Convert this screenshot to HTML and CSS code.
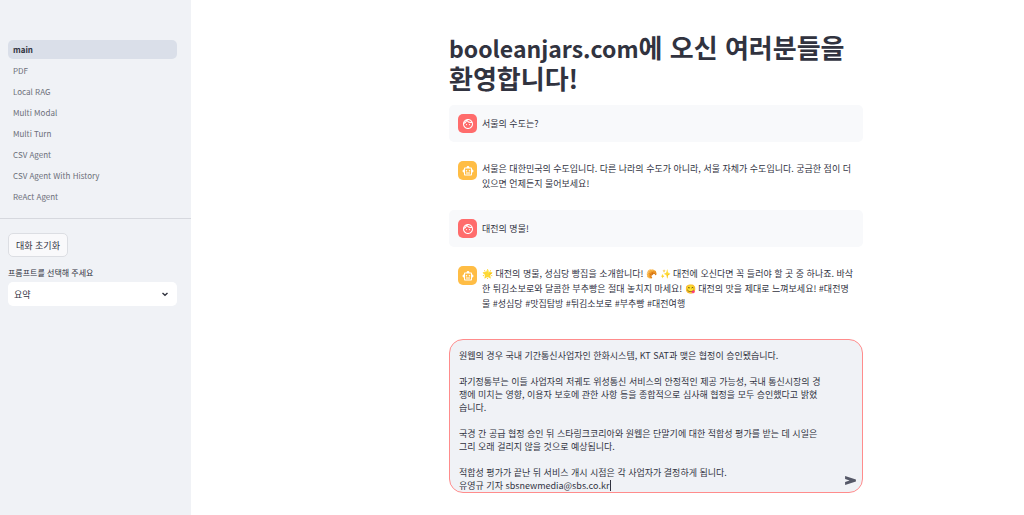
FILE: index.html
```html
<!DOCTYPE html>
<html lang="ko">
<head>
    <meta charset="UTF-8">
    <meta name="viewport" content="width=device-width, initial-scale=1.0">
    <title>main</title>
    <link rel="stylesheet" href="styles.css">
</head>
<body>
    <!-- Shared avatar icons -->
    <svg class="sprite" aria-hidden="true">
        <symbol id="icon-face" viewBox="0 0 24 24">
            <path d="M10.25 13a1.25 1.25 0 1 1-2.5 0 1.25 1.25 0 0 1 2.5 0zM15 11.75a1.25 1.25 0 1 0 0 2.5 1.25 1.25 0 0 0 0-2.5zM22 12c0 5.52-4.48 10-10 10S2 17.52 2 12 6.48 2 12 2s10 4.48 10 10zM10.66 4.12C12.06 6.44 14.6 8 17.5 8c.46 0 .91-.05 1.34-.12C17.44 5.56 14.9 4 12 4c-.46 0-.91.05-1.34.12zM4.42 9.47a8.05 8.05 0 0 0 3.66-4.44 8.05 8.05 0 0 0-3.66 4.44zM20 12c0-.78-.12-1.53-.33-2.24-.7.15-1.42.24-2.17.24a10 10 0 0 1-7.76-3.69A10.02 10.02 0 0 1 4 11.86V12c0 4.41 3.59 8 8 8s8-3.59 8-8z"/>
        </symbol>
        <symbol id="icon-bot" viewBox="0 0 24 24">
            <path d="M20 9V7c0-1.1-.9-2-2-2h-3c0-1.66-1.34-3-3-3S9 3.34 9 5H6c-1.1 0-2 .9-2 2v2c-1.66 0-3 1.34-3 3s1.34 3 3 3v4c0 1.1.9 2 2 2h12c1.1 0 2-.9 2-2v-4c1.66 0 3-1.34 3-3s-1.34-3-3-3zm-2 10H6V7h12v12zm-9-6c-.83 0-1.5-.67-1.5-1.5S8.17 10 9 10s1.5.67 1.5 1.5S9.83 13 9 13zm7.5-1.5c0 .83-.67 1.5-1.5 1.5s-1.5-.67-1.5-1.5.67-1.5 1.5-1.5 1.5.67 1.5 1.5zM8 15h8v2H8v-2z"/>
        </symbol>
    </svg>

    <div class="app">
        <aside class="sidebar">
            <nav class="nav">
                <a href="#" class="nav-link active">main</a>
                <a href="#" class="nav-link">PDF</a>
                <a href="#" class="nav-link">Local RAG</a>
                <a href="#" class="nav-link">Multi Modal</a>
                <a href="#" class="nav-link">Multi Turn</a>
                <a href="#" class="nav-link">CSV Agent</a>
                <a href="#" class="nav-link">CSV Agent With History</a>
                <a href="#" class="nav-link">ReAct Agent</a>
            </nav>
            <div class="controls">
                <button type="button" class="reset-btn">대화 초기화</button>
                <label for="prompt-type">프롬프트를 선택해 주세요</label>
                <div class="select-wrap">
                    <select id="prompt-type">
                        <option>요약</option>
                    </select>
                    <svg class="chevron" viewBox="0 0 8 8"><path d="M1.5 3l2.5 2.3L6.5 3"/></svg>
                </div>
            </div>
        </aside>

        <main class="main">
            <div class="column">
                <h1><span class="domain">booleanjars.com</span>에 오신 여러분들을 환영합니다!</h1>

                <div class="message user">
                    <div class="avatar"><svg><use href="#icon-face"/></svg></div>
                    <p>서울의 수도는?</p>
                </div>
                <div class="message bot">
                    <div class="avatar"><svg><use href="#icon-bot"/></svg></div>
                    <p>서울은 대한민국의 수도입니다. 다른 나라의 수도가 아니라, 서울 자체가 수도입니다. 궁금한 점이 더 있으면 언제든지 물어보세요!</p>
                </div>
                <div class="message user">
                    <div class="avatar"><svg><use href="#icon-face"/></svg></div>
                    <p>대전의 명물!</p>
                </div>
                <div class="message bot">
                    <div class="avatar"><svg><use href="#icon-bot"/></svg></div>
                    <p>🌟 대전의 명물, 성심당 빵집을 소개합니다! 🥐 ✨ 대전에 오신다면 꼭 들러야 할 곳 중 하나죠. 바삭<br>한 튀김소보로와 달콤한 부추빵은 절대 놓치지 마세요! 😋 대전의 맛을 제대로 느껴보세요! #대전명<br>물 #성심당 #맛집탐방 #튀김소보로 #부추빵 #대전여행</p>
                </div>

                <form class="composer">
                    <textarea id="chat-input" rows="11" aria-label="메시지" autofocus>원웹의 경우 국내 기간통신사업자인 한화시스템, KT SAT과 맺은 협정이 승인됐습니다.

과기정통부는 이들 사업자의 저궤도 위성통신 서비스의 안정적인 제공 가능성, 국내 통신시장의 경
쟁에 미치는 영향, 이용자 보호에 관한 사항 등을 종합적으로 심사해 협정을 모두 승인했다고 밝혔
습니다.

국경 간 공급 협정 승인 뒤 스타링크코리아와 원웹은 단말기에 대한 적합성 평가를 받는 데 시일은
그리 오래 걸리지 않을 것으로 예상됩니다.

적합성 평가가 끝난 뒤 서비스 개시 시점은 각 사업자가 결정하게 됩니다.
유영규 기자 sbsnewmedia@sbs.co.kr</textarea>
                    <span class="caret"></span>
                    <button type="submit" class="send-btn" aria-label="전송">
                        <svg viewBox="0 0 12 10"><path d="M0 0l12 4v2L0 10V6.6L5 5 0 3.4z"/></svg>
                    </button>
                </form>
            </div>
        </main>
    </div>

    <script>
        // Start with the caret after the drafted text
        const input = document.getElementById('chat-input');
        const caret = document.querySelector('.caret');
        input.focus();
        input.setSelectionRange(input.value.length, input.value.length);
        input.addEventListener('input', () => caret.remove());
    </script>
</body>
</html>
```

FILE: styles.css
```css
* {
    box-sizing: border-box;
}
body {
    margin: 0;
    font-family: "Noto Sans CJK KR", sans-serif;
    font-size: 9px;
    color: #31333f;
    background: #fff;
}
button, select, textarea {
    font: inherit;
    color: inherit;
}
.sprite {
    display: none;
}
.app {
    display: flex;
    min-height: 100vh;
}

/* Sidebar */
.sidebar {
    flex: 0 0 191px;
    background: #f0f2f6;
}
.nav {
    display: flex;
    flex-direction: column;
    gap: 2px;
    padding: 40px 14px 12px 8px;
    border-bottom: 1px solid #d6d8de;
}
.nav-link {
    padding: 0 5px;
    border-radius: 5px;
    font-size: 8px;
    line-height: 19px;
    color: #6c6f79;
    text-decoration: none;
}
.nav-link.active {
    background: #dadfe9;
    color: #31333f;
    font-weight: 700;
}
.controls {
    display: flex;
    flex-direction: column;
    align-items: flex-start;
    padding: 14px 14px 0 8px;
}
.reset-btn {
    height: 24px;
    padding: 0 7px;
    border: 1px solid #dcdee3;
    border-radius: 5px;
    background: #f9f9fb;
}
.controls label {
    margin: 9px 0 3px;
    font-size: 8px;
    line-height: 13px;
}
.select-wrap {
    position: relative;
    width: 100%;
}
.select-wrap select {
    display: block;
    width: 100%;
    height: 24px;
    padding: 0 6px;
    border: 0;
    border-radius: 5px;
    background: #fff;
    appearance: none;
}
.chevron {
    position: absolute;
    right: 8px;
    top: 8px;
    width: 8px;
    height: 8px;
    fill: none;
    stroke: #31333f;
    stroke-width: 1.4;
}

/* Chat */
.main {
    flex: 1;
    display: flex;
    justify-content: center;
    padding: 31px 0 20px 97px;
}
.column {
    width: 100%;
    max-width: 414px;
}
h1 {
    margin: 0 0 12px;
    font-size: 26px;
    font-weight: 700;
    line-height: 31px;
}
.domain {
    font-size: 23px;
    line-height: 1;
}
.message {
    display: flex;
    align-items: flex-start;
    gap: 5px;
    margin-bottom: 10px;
    padding: 9px 4px 9px 9px;
    border-radius: 5px;
}
.message.user {
    background: #f8f9fb;
}
.avatar {
    display: flex;
    flex: 0 0 19px;
    height: 19px;
    border-radius: 5px;
    background: #ff6c6c;
}
.bot .avatar {
    background: #ffbd45;
}
.avatar svg {
    width: 12px;
    height: 12px;
    margin: auto;
    fill: #fff;
}
.message p {
    margin: 0;
    line-height: 15px;
}
.user p {
    padding: 2px 0;
}
.composer {
    position: relative;
    margin-top: 19px;
    padding: 9px 30px 0 9px;
    border: 1px solid #ff8c8c;
    border-radius: 14px;
    background: #f0f2f6;
}
.composer textarea {
    display: block;
    width: 100%;
    padding: 0;
    border: 0;
    outline: 0;
    resize: none;
    overflow: hidden;
    background: transparent;
    line-height: 13px;
    caret-color: transparent;
}
.composer textarea:not(:focus) + .caret {
    display: none;
}
.caret {
    position: absolute;
    left: 160px;
    bottom: 1px;
    width: 1px;
    height: 11px;
    background: #31333f;
}
.send-btn {
    position: absolute;
    right: 6px;
    bottom: 7px;
    padding: 0;
    border: 0;
    background: none;
}
.send-btn svg {
    display: block;
    width: 11px;
    height: 9px;
    fill: #555867;
}
```
